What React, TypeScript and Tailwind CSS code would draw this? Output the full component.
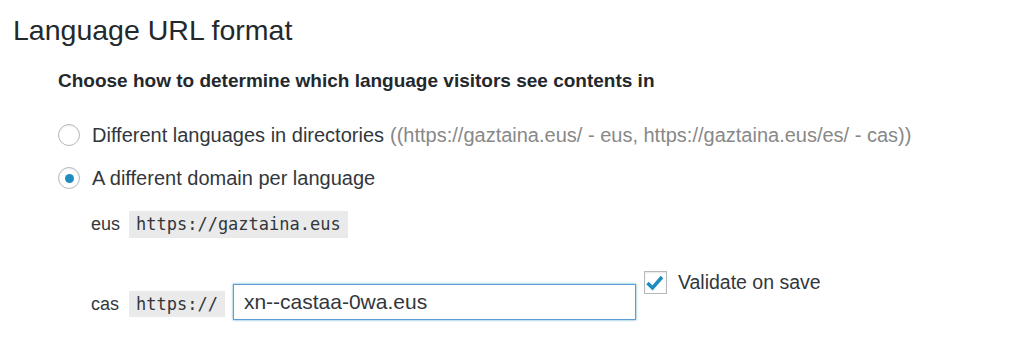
import { useState } from 'react';

export default function App() {
  const [mode, setMode] = useState('domain');
  const [casDomain, setCasDomain] = useState('xn--castaa-0wa.eus');
  const [validate, setValidate] = useState(true);

  return (
    <div className="w-[1024px] h-[352px] bg-white overflow-hidden font-['Liberation_Sans',Arial,sans-serif] text-[#32373c]">
      <h2 className="pl-[13px] pt-[14px] text-[28.5px] leading-[32px] text-[#23282d]">Language URL format</h2>

      <div className="pl-[58px]">
        <p className="mt-[24px] text-[19px] leading-[22px] font-bold text-[#23282d]">
          Choose how to determine which language visitors see contents in
        </p>

        <label className="mt-[32px] flex items-center h-[22px] text-[20px]" onClick={() => setMode('dirs')}>
          <span className="w-[22px] h-[22px] rounded-full border border-[#b4b9be] bg-white shadow-[inset_0_1px_2px_rgba(0,0,0,0.07)] flex items-center justify-center">
            {mode === 'dirs' && <span className="w-[9px] h-[9px] rounded-full bg-[#1e8cbe]" />}
          </span>
          <span className="ml-[12px]">Different languages in directories</span>
          <span className="ml-[6px] text-[#888]">((https://gaztaina.eus/ - eus, https://gaztaina.eus/es/ - cas))</span>
        </label>

        <label className="mt-[21px] flex items-center h-[22px] text-[20px]" onClick={() => setMode('domain')}>
          <span className="w-[22px] h-[22px] rounded-full border border-[#b4b9be] bg-white shadow-[inset_0_1px_2px_rgba(0,0,0,0.07)] flex items-center justify-center">
            {mode === 'domain' && <span className="w-[9px] h-[9px] rounded-full bg-[#1e8cbe]" />}
          </span>
          <span className="ml-[12px]">A different domain per language</span>
        </label>

        <div className="pl-[33px]">
          <div className="mt-[22px] flex items-center text-[18px]">
            <span className="w-[38px]">eus</span>
            <code className="px-[7px] h-[27px] leading-[27px] bg-[#eaeaea] font-['DejaVu_Sans_Mono',monospace] text-[17px] text-[#32373c]">
              https://gaztaina.eus
            </code>
          </div>

          <div className="mt-[30px] flex items-start">
            <div className="mt-[16px] flex items-center text-[18px]">
              <span className="mt-[4px] w-[38px]">cas</span>
              <code className="mt-[3px] px-[7px] h-[26px] leading-[26px] bg-[#eaeaea] font-['DejaVu_Sans_Mono',monospace] text-[17px] text-[#32373c]">
                https://
              </code>
              <input
                type="text"
                value={casDomain}
                onChange={(e) => setCasDomain(e.target.value)}
                className="ml-[8px] w-[403px] h-[36px] px-[10px] border border-[#5b9dd9] shadow-[0_0_2px_rgba(30,140,190,0.8)] outline-none text-[21px] text-[#32373c] bg-white"
              />
            </div>

            <label className="ml-[8px] flex items-center" onClick={() => setValidate(!validate)}>
              <span className="w-[23px] h-[23px] border border-[#b4b9be] bg-white shadow-[inset_0_1px_2px_rgba(0,0,0,0.1)] flex items-center justify-center">
                {validate && (
                  <svg width="20" height="20" viewBox="0 0 20 20">
                    <path d="M2.5 10 L7.5 15 L17 4" fill="none" stroke="#1e8cbe" strokeWidth="3.5" />
                  </svg>
                )}
              </span>
              <span className="ml-[11px] text-[19.5px]">Validate on save</span>
            </label>
          </div>
        </div>
      </div>
    </div>
  );
}
